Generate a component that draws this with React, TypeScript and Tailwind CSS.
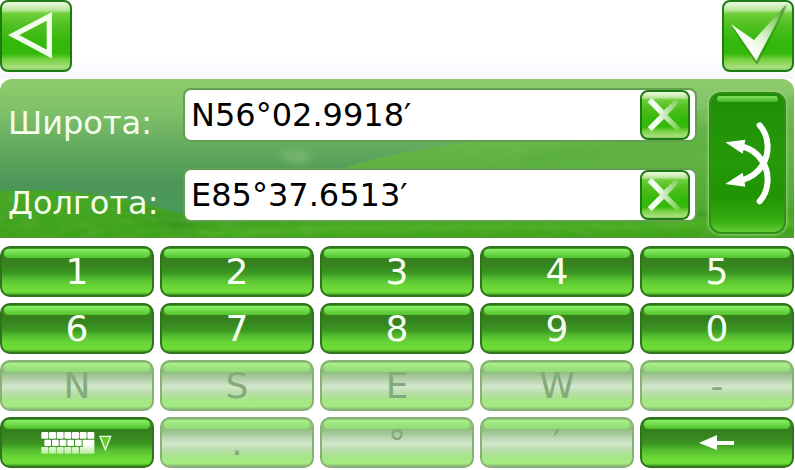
import { useState } from "react";
import clsx from "clsx";

type TCoordinateFieldProps = {
    id: string;
    label: string;
    initial: string;
};

type TKey = {
    label: string;
    disabled?: boolean;
    icon?: "keyboard" | "erase";
};

const keys: TKey[] = [
    { label: "1" },
    { label: "2" },
    { label: "3" },
    { label: "4" },
    { label: "5" },
    { label: "6" },
    { label: "7" },
    { label: "8" },
    { label: "9" },
    { label: "0" },
    { label: "N", disabled: true },
    { label: "S", disabled: true },
    { label: "E", disabled: true },
    { label: "W", disabled: true },
    { label: "-", disabled: true },
    { label: "Клавиатура", icon: "keyboard" },
    { label: ".", disabled: true },
    { label: "°", disabled: true },
    { label: "′", disabled: true },
    { label: "Стереть", icon: "erase" },
];

const glossy =
    "flex items-center justify-center border-2 border-[#1d7d12] bg-[linear-gradient(#eefae4_0%,#b9e69a_12%,#6fcf3a_17%,#50c020_34%,#35b80c_58%,#35b80c_76%,#74cf3c_84%,#a9e07c_96%,#8cc96a_100%)]";

function BackIcon() {
    return (
        <svg className="shrink-0" width="72" height="72" viewBox="0 0 216 216" aria-hidden="true">
            <path
                d="M41 105 L148 49 V162 Z"
                fill="none"
                stroke="#f1fdea"
                strokeWidth="16"
                strokeMiterlimit="10"
            />
        </svg>
    );
}

function CheckIcon() {
    return (
        <svg className="shrink-0" width="72" height="72" viewBox="261 0 216 216" aria-hidden="true">
            <defs>
                <linearGradient id="check" x1="0" y1="1" x2="1" y2="0">
                    <stop offset="0.25" stopColor="#ffffff" />
                    <stop offset="0.5" stopColor="#dcf3cf" />
                    <stop offset="0.75" stopColor="#8fcf72" />
                    <stop offset="0.95" stopColor="#3f9c22" />
                </linearGradient>
            </defs>
            <path d="M290 82 L357 128 L458 14 L366 196 Z" fill="#2c8c12" opacity="0.6" />
            <path d="M288 72 L357 120 L455 12 L364 182 Z" fill="url(#check)" />
        </svg>
    );
}

function ClearIcon() {
    return (
        <svg className="shrink-0" width="50" height="50" viewBox="600 30 150 150" aria-hidden="true">
            <defs>
                <linearGradient id="cross" x1="0" y1="0" x2="1" y2="0">
                    <stop offset="0.3" stopColor="#f4fdef" />
                    <stop offset="1" stopColor="#6cc944" />
                </linearGradient>
            </defs>
            <path
                d="M623 66 L635 54 L672 91 L709 56 L719 66 L683 104 L721 143 L711 153 L672 117 L635 153 L623 142 L660 104 Z"
                fill="url(#cross)"
            />
        </svg>
    );
}

function SwapIcon() {
    return (
        <svg className="shrink-0" width="52" height="84" viewBox="270 125 156 252" aria-hidden="true">
            <g fill="none" stroke="#fff" strokeWidth="18">
                <path strokeLinecap="round" d="M383 138 C412 170 414 222 392 256 C378 280 356 294 332 302" />
                <path strokeLinecap="round" d="M383 366 C412 334 414 282 392 247 C378 224 356 208 332 202" />
            </g>
            <path d="M280 189 L340 181 L332 223 Z" fill="#fff" />
            <path d="M280 314 L332 280 L340 322 Z" fill="#fff" />
        </svg>
    );
}

function KeyboardIcon() {
    return (
        <svg width="72" height="24" viewBox="125 243 216 72" aria-hidden="true">
            <defs>
                <linearGradient id="caps" x1="0" y1="245" x2="0" y2="312" gradientUnits="userSpaceOnUse">
                    <stop offset="0.55" stopColor="#ffffff" />
                    <stop offset="1" stopColor="#b4ec98" />
                </linearGradient>
            </defs>
            <g fill="url(#caps)">
                {[126, 149, 172, 195, 218, 241, 264].map((x) => (
                    <rect key={x} x={x} y="246" width="21" height="20" rx="3" />
                ))}
                {[135, 158, 181, 204, 227].map((x) => (
                    <rect key={x} x={x} y="269" width="20" height="19" rx="3" />
                ))}
                {[126, 149, 172, 195, 218].map((x) => (
                    <rect key={x} x={x} y="291" width="21" height="20" rx="3" />
                ))}
                <path d="M250 269 H285 V311 H242 V291 H250 Z" />
            </g>
            <path d="M302 259 H334 L318 299 Z" fill="#5fcf2c" stroke="#eefce6" strokeWidth="4" />
        </svg>
    );
}

function EraseIcon() {
    return (
        <svg width="36" height="16" viewBox="0 0 36 16" aria-hidden="true">
            <path d="M0 8 L18 0 V6 H35 V10 H18 V15 Z" fill="#fff" />
        </svg>
    );
}

// hills and sky behind the coordinate form
function Landscape() {
    return (
        <svg
            className="absolute inset-0 h-full w-full"
            viewBox="0 0 794 158"
            preserveAspectRatio="none"
            aria-hidden="true"
        >
            <defs>
                <linearGradient id="sky" x1="0" y1="0" x2="0" y2="1">
                    <stop offset="0" stopColor="#8fcb6c" />
                    <stop offset="0.2" stopColor="#80c168" />
                    <stop offset="0.45" stopColor="#62a95f" />
                    <stop offset="0.66" stopColor="#4b9658" />
                    <stop offset="1" stopColor="#4b9e5e" />
                </linearGradient>
                <linearGradient id="hill" x1="0" y1="0" x2="0" y2="1">
                    <stop offset="0" stopColor="#84c667" />
                    <stop offset="0.4" stopColor="#64b647" />
                    <stop offset="1" stopColor="#43a520" />
                </linearGradient>
                <linearGradient id="meadow" x1="0" y1="0" x2="0" y2="1">
                    <stop offset="0" stopColor="#45a627" />
                    <stop offset="1" stopColor="#3fa31a" />
                </linearGradient>
                <filter id="soft">
                    <feGaussianBlur stdDeviation="3" />
                </filter>
                <filter id="grass" x="0" y="0" width="100%" height="100%">
                    <feTurbulence type="fractalNoise" baseFrequency="0.05 0.16" numOctaves="3" seed="4" />
                    <feColorMatrix values="0 0 0 0 0.12  0 0 0 0 0.42  0 0 0 0 0.05  1.6 0 0 0 -0.6" />
                    <feComposite in2="SourceGraphic" operator="in" />
                </filter>
            </defs>
            <rect width="794" height="158" fill="url(#sky)" />
            <path d="M280 72 L300 70 L314 78 L300 86 L284 80 Z" fill="#82bd7c" opacity="0.6" filter="url(#soft)" />
            <path d="M330 94 C400 68 500 58 590 50 C660 40 730 24 794 16 V158 H330 Z" fill="url(#hill)" />
            <path d="M520 78 C600 50 690 56 794 20 V60 C700 84 620 70 520 92 Z" fill="#4aa32d" opacity="0.25" filter="url(#soft)" />
            <path d="M0 112 C60 108 120 116 184 136 C300 146 500 142 794 128 V158 H0 Z" fill="url(#meadow)" />
            <path d="M120 126 L180 154 L200 140 Z" fill="#338c20" opacity="0.5" filter="url(#soft)" />
            <path d="M200 154 C380 138 560 152 794 138 V146 C600 154 400 146 200 158 Z" fill="#61c42d" opacity="0.6" filter="url(#soft)" />
            <path
                d="M0 112 C60 108 120 116 184 136 L330 94 C400 68 500 58 590 50 C660 40 730 24 794 16 V158 H0 Z"
                opacity="0.6"
                filter="url(#grass)"
            />
        </svg>
    );
}

function CoordinateField({ id, label, initial }: TCoordinateFieldProps) {
    const [value, setValue] = useState(initial);

    return (
        <div className="flex items-center">
            <label htmlFor={id} className="w-[183px] shrink-0 pl-2 pt-4 text-[32px] leading-9 text-[#f4ffee]">
                {label}
            </label>
            <div className="flex min-w-0 grow items-center rounded-lg border-2 border-[#62a050] bg-white pr-[5px]">
                <input
                    id={id}
                    type="text"
                    value={value}
                    onChange={(e) => setValue(e.target.value)}
                    className="h-[50px] min-w-0 grow bg-transparent pl-1.5 text-[32px] text-black outline-none"
                />
                <button
                    type="button"
                    aria-label="Очистить"
                    onClick={() => setValue("")}
                    className={clsx(glossy, "size-[50px] shrink-0 rounded-lg")}
                >
                    <ClearIcon />
                </button>
            </div>
        </div>
    );
}

function KeyButton({ label, disabled, icon }: TKey) {
    return (
        <button
            type="button"
            disabled={disabled}
            aria-label={icon ? label : undefined}
            className={clsx(
                "relative flex h-[51px] items-center justify-center rounded-[10px] border-2 text-[36px] leading-none",
                "before:absolute before:inset-x-0.5 before:top-px before:h-[9px] before:rounded-full",
                disabled
                    ? "border-[#88b176] bg-[linear-gradient(#93ce7c_0%,#8fbd82_22%,#b2cfa8_36%,#d3e7cc_52%,#b9dda9_66%,#a6e688_80%,#a4ec80_94%,#8dbe78_100%)] text-[#84aa7c] before:bg-[linear-gradient(#aaf08c,#92d977)]"
                    : "border-[#2f741c] bg-[linear-gradient(#3f9e22_0%,#35801d_22%,#368420_36%,#3b9822_54%,#55bd30_66%,#68d437_80%,#6fde39_94%,#3e9620_100%)] text-[#f7fff3] before:bg-[linear-gradient(#8af264,#50c22d)]"
            )}
        >
            {icon === "keyboard" && <KeyboardIcon />}
            {icon === "erase" && <EraseIcon />}
            {!icon && label}
        </button>
    );
}

export default function App() {
    return (
        <main className="bg-white pr-px font-['DejaVu_Sans',sans-serif]">
            <header className="flex justify-between bg-[linear-gradient(#ffffff_70%,#f6f6fc)] pb-[7px]">
                <button type="button" aria-label="Назад" className={clsx(glossy, "size-[72px] rounded-lg")}>
                    <BackIcon />
                </button>
                <button type="button" aria-label="Готово" className={clsx(glossy, "size-[72px] rounded-lg")}>
                    <CheckIcon />
                </button>
            </header>

            <section className="relative overflow-hidden rounded-t-xl border-b border-[#4f9a3a]">
                <Landscape />
                <form className="relative flex gap-3 pb-[3px] pr-2 pt-[9px]" onSubmit={(e) => e.preventDefault()}>
                    <div className="flex min-w-0 grow flex-col gap-[26px] pb-3">
                        <CoordinateField id="latitude" label="Широта:" initial="N56°02.9918′" />
                        <CoordinateField id="longitude" label="Долгота:" initial="E85°37.6513′" />
                    </div>
                    <button
                        type="button"
                        aria-label="Поменять местами"
                        className="relative mt-1 flex w-[77px] shrink-0 items-center justify-center rounded-xl border-2 border-[#2f8f16] bg-[linear-gradient(#1f8f08_0%,#259808_50%,#219404_75%,#37ae12_92%,#62cd35_100%)] shadow-[0_0_3px_1px_#9ad67a] before:absolute before:inset-x-1.5 before:top-0.5 before:h-1.5 before:rounded-full before:bg-[linear-gradient(#82e05c,#48b425)]"
                    >
                        <SwapIcon />
                    </button>
                </form>
            </section>

            <section className="grid grid-cols-5 gap-1.5 pt-2">
                {keys.map((key) => (
                    <KeyButton key={key.label} {...key} />
                ))}
            </section>
        </main>
    );
}
